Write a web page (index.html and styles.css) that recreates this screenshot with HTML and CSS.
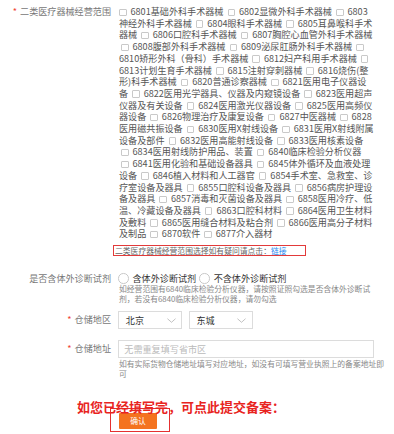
FILE: index.html
```html
<!DOCTYPE html>
<html lang="zh-CN">

<head>
  <meta charset="UTF-8">
  <meta name="viewport" content="width=device-width, initial-scale=1.0">
  <title>备案信息</title>
  <link rel="stylesheet" href="styles.css">
</head>

<body>
  <form class="record-form">

    <!-- 经营范围 -->
    <div class="form-row scope-row">
      <label class="form-label required">二类医疗器械经营范围</label>
      <div class="form-field">
        <div class="scope-list">
          <label class="scope-item"><input type="checkbox">6801基础外科手术器械</label>
          <label class="scope-item"><input type="checkbox">6802显微外科手术器械</label>
          <label class="scope-item"><input type="checkbox">6803神经外科手术器械</label>
          <label class="scope-item"><input type="checkbox">6804眼科手术器械</label>
          <label class="scope-item"><input type="checkbox">6805耳鼻喉科手术器械</label>
          <label class="scope-item"><input type="checkbox">6806口腔科手术器械</label>
          <label class="scope-item"><input type="checkbox">6807胸腔心血管外科手术器械</label>
          <label class="scope-item"><input type="checkbox">6808腹部外科手术器械</label>
          <label class="scope-item"><input type="checkbox">6809泌尿肛肠外科手术器械</label>
          <label class="scope-item"><input type="checkbox">6810矫形外科（骨科）手术器械</label>
          <label class="scope-item"><input type="checkbox">6812妇产科用手术器械</label>
          <label class="scope-item"><input type="checkbox">6813计划生育手术器械</label>
          <label class="scope-item"><input type="checkbox">6815注射穿刺器械</label>
          <label class="scope-item"><input type="checkbox">6816烧伤(整形)科手术器械</label>
          <label class="scope-item"><input type="checkbox">6820普通诊察器械</label>
          <label class="scope-item"><input type="checkbox">6821医用电子仪器设备</label>
          <label class="scope-item"><input type="checkbox">6822医用光学器具、仪器及内窥镜设备</label>
          <label class="scope-item"><input type="checkbox">6823医用超声仪器及有关设备</label>
          <label class="scope-item"><input type="checkbox">6824医用激光仪器设备</label>
          <label class="scope-item"><input type="checkbox">6825医用高频仪器设备</label>
          <label class="scope-item"><input type="checkbox">6826物理治疗及康复设备</label>
          <label class="scope-item"><input type="checkbox">6827中医器械</label>
          <label class="scope-item"><input type="checkbox">6828医用磁共振设备</label>
          <label class="scope-item"><input type="checkbox">6830医用X射线设备</label>
          <label class="scope-item"><input type="checkbox">6831医用X射线附属设备及部件</label>
          <label class="scope-item"><input type="checkbox">6832医用高能射线设备</label>
          <label class="scope-item"><input type="checkbox">6833医用核素设备</label>
          <label class="scope-item"><input type="checkbox">6834医用射线防护用品、装置</label>
          <label class="scope-item"><input type="checkbox">6840临床检验分析仪器</label>
          <label class="scope-item"><input type="checkbox">6841医用化验和基础设备器具</label>
          <label class="scope-item"><input type="checkbox">6845体外循环及血液处理设备</label>
          <label class="scope-item"><input type="checkbox">6846植入材料和人工器官</label>
          <label class="scope-item"><input type="checkbox">6854手术室、急救室、诊疗室设备及器具</label>
          <label class="scope-item"><input type="checkbox">6855口腔科设备及器具</label>
          <label class="scope-item"><input type="checkbox">6856病房护理设备及器具</label>
          <label class="scope-item"><input type="checkbox">6857消毒和灭菌设备及器具</label>
          <label class="scope-item"><input type="checkbox">6858医用冷疗、低温、冷藏设备及器具</label>
          <label class="scope-item"><input type="checkbox">6863口腔科材料</label>
          <label class="scope-item"><input type="checkbox">6864医用卫生材料及敷料</label>
          <label class="scope-item"><input type="checkbox">6865医用缝合材料及粘合剂</label>
          <label class="scope-item"><input type="checkbox">6866医用高分子材料及制品</label>
          <label class="scope-item"><input type="checkbox">6870软件</label>
          <label class="scope-item"><input type="checkbox">6877介入器材</label>
        </div>
        <p class="scope-tip">二类医疗器械经营范围选择如有疑问请点击：<a href="#">链接</a></p>
      </div>
    </div>

    <!-- 体外诊断试剂 -->
    <div class="form-row radio-row">
      <label class="form-label">是否含体外诊断试剂</label>
      <div class="form-field">
        <div class="radio-group">
          <label class="radio-item"><input type="radio" name="ivd">含体外诊断试剂</label>
          <label class="radio-item"><input type="radio" name="ivd">不含体外诊断试剂</label>
        </div>
        <p class="field-help radio-help">如经营范围有6840临床检验分析仪器，请按照证照勾选是否含体外诊断试剂，若没有6840临床检验分析仪器，请勿勾选</p>
      </div>
    </div>

    <!-- 仓储地区 -->
    <div class="form-row region-row">
      <label class="form-label required">仓储地区</label>
      <div class="form-field select-group">
        <div class="select-box">
          <span>北京</span>
          <svg class="chevron" viewBox="0 0 10 5" width="9" height="5"><path d="M0.5 0.5 L5 4.5 L9.5 0.5" /></svg>
        </div>
        <div class="select-box">
          <span>东城</span>
          <svg class="chevron" viewBox="0 0 10 5" width="9" height="5"><path d="M0.5 0.5 L5 4.5 L9.5 0.5" /></svg>
        </div>
      </div>
    </div>

    <!-- 仓储地址 -->
    <div class="form-row address-row">
      <label class="form-label required">仓储地址</label>
      <div class="form-field">
        <input type="text" class="text-input" placeholder="无需重复填写省市区">
        <p class="field-help address-help">如有实际货物仓储地址填写对应地址，如没有可填写营业执照上的备案地址即可</p>
      </div>
    </div>

    <p class="submit-note">如您已经填写完，可点此提交备案：</p>
    <div class="submit-box">
      <button type="submit">确认</button>
    </div>

  </form>
</body>

</html>
```

FILE: styles.css
```css
/* Reset styles */
* {
  margin: 0;
  padding: 0;
  box-sizing: border-box;
}

body {
  font-family: "Noto Sans CJK SC", sans-serif;
  font-size: 9.1px;
  background-color: #fff;
  color: #666;
}

/* Form rows */
.form-row {
  display: flex;
  align-items: flex-start;
}

.form-label {
  flex: none;
  width: 119px;
  padding-right: 8px;
  text-align: right;
  color: #777;
}

.form-label.required::before {
  content: "*";
  color: #f04134;
  margin-right: 3px;
}

.form-field {
  flex: none;
}

/* Business scope */
.scope-row {
  padding-top: 6px;
}

.scope-row .form-label {
  line-height: 11.7px;
}

.scope-list {
  width: 256px;
  line-height: 11.7px;
  color: #555;
}

.scope-item input,
.radio-item input {
  appearance: none;
  -webkit-appearance: none;
  background-color: #fff;
  border: 1px solid #c9c9c9;
}

.scope-item input {
  width: 7.5px;
  height: 7.5px;
  border-radius: 1px;
  margin: 0 4px 0 2px;
  vertical-align: -1px;
}

.scope-item:first-child input {
  margin-left: 0;
}

.scope-tip {
  display: inline-block;
  margin: 5px 0 0 -6px;
  padding: 0 18px 0 1px;
  border: 1.5px solid #e23a3a;
  font-size: 7.8px;
  line-height: 9px;
  color: #666;
}

.scope-tip a {
  color: #2d8cf0;
  text-decoration: none;
}

/* Radio row */
.radio-row {
  margin-top: 16px;
}

.radio-row .form-label {
  line-height: 11px;
}

.radio-group {
  display: flex;
  line-height: 11px;
  color: #333;
}

.radio-item {
  display: flex;
  align-items: center;
  margin-right: 3px;
}

.radio-item input {
  width: 10.5px;
  height: 10.5px;
  border-radius: 50%;
  margin: 0 4px 0 -1px;
}

.radio-item + .radio-item input {
  margin-left: 0;
}

.field-help {
  font-size: 7.8px;
  color: #888;
}

.radio-help {
  width: 252px;
  line-height: 9.6px;
}

/* Region selects */
.region-row {
  margin-top: 8px;
  align-items: center;
}

.region-row .form-label,
.address-row .form-label {
  line-height: 17.6px;
}

.select-group {
  display: flex;
  gap: 6.6px;
  margin-left: -0.7px;
}

.select-box {
  display: flex;
  align-items: center;
  justify-content: space-between;
  width: 64px;
  height: 17.6px;
  padding: 0 5.5px 0 6.5px;
  border: 1px solid #dcdcdc;
  color: #333;
}

.chevron {
  fill: none;
  stroke: #aaa;
  stroke-width: 0.8;
}

/* Address */
.address-row {
  margin-top: 11.4px;
}

.text-input {
  display: block;
  width: 256px;
  height: 17.6px;
  margin-left: -0.7px;
  padding: 0 5px;
  border: 1px solid #dcdcdc;
  font-family: inherit;
  font-size: 9.1px;
  color: #333;
}

.text-input::placeholder {
  color: #bbb;
}

.address-help {
  width: 267px;
  line-height: 10px;
  margin-top: 1px;
}

/* Submit */
.submit-note {
  margin-top: 20px;
  padding-left: 77px;
  font-size: 13px;
  font-weight: bold;
  line-height: 16px;
  color: #e8251f;
}

.submit-box {
  width: 60px;
  height: 24px;
  margin: -7px 0 0 110px;
  padding: 4px 0 0 7.8px;
  border: 1.5px solid #e53030;
}

.submit-box button {
  display: block;
  width: 38.4px;
  height: 16px;
  border: none;
  border-radius: 1px;
  background-color: #f4731f;
  color: #fff;
  font-family: inherit;
  font-size: 7.8px;
}
```
